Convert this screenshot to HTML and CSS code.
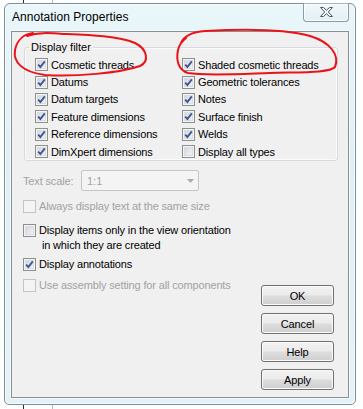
FILE: index.html
```html
<!DOCTYPE html>
<html>
<head>
<meta charset="utf-8">
<link rel="stylesheet" href="styles.css">
</head>
<body>
<div class="desk">
  <div class="bgline bgline-a"></div>
  <div class="bgline bgline-b"></div>
  <div class="window">
    <div class="titlebar">
      <span class="title">Annotation Properties</span>
      <div class="close">
        <svg width="13" height="10" viewBox="0 0 13 10"><polygon points="0.5,0.5 3.5,0.5 6.5,3.3 9.5,0.5 12.5,0.5 8.3,5 12.5,9.5 9.5,9.5 6.5,6.7 3.5,9.5 0.5,9.5 4.7,5" fill="#f2f5f7" stroke="#4f5863" stroke-width="1" stroke-linejoin="round"/></svg>
      </div>
    </div>
    <div class="client">
      <div class="group">
        <span class="legend">Display filter</span>
        <div class="filter-grid">
          <label class="opt"><span class="cb on"><svg width="9" height="9" viewBox="0 0 9 9"><path d="M1.2 4.6 L3.4 7 L7.8 1.4" fill="none" stroke="#3f5697" stroke-width="1.9"/></svg></span>Cosmetic threads</label>
          <label class="opt"><span class="cb on"><svg width="9" height="9" viewBox="0 0 9 9"><path d="M1.2 4.6 L3.4 7 L7.8 1.4" fill="none" stroke="#3f5697" stroke-width="1.9"/></svg></span>Shaded cosmetic threads</label>
          <label class="opt"><span class="cb on"><svg width="9" height="9" viewBox="0 0 9 9"><path d="M1.2 4.6 L3.4 7 L7.8 1.4" fill="none" stroke="#3f5697" stroke-width="1.9"/></svg></span>Datums</label>
          <label class="opt"><span class="cb on"><svg width="9" height="9" viewBox="0 0 9 9"><path d="M1.2 4.6 L3.4 7 L7.8 1.4" fill="none" stroke="#3f5697" stroke-width="1.9"/></svg></span>Geometric tolerances</label>
          <label class="opt"><span class="cb on"><svg width="9" height="9" viewBox="0 0 9 9"><path d="M1.2 4.6 L3.4 7 L7.8 1.4" fill="none" stroke="#3f5697" stroke-width="1.9"/></svg></span>Datum targets</label>
          <label class="opt"><span class="cb on"><svg width="9" height="9" viewBox="0 0 9 9"><path d="M1.2 4.6 L3.4 7 L7.8 1.4" fill="none" stroke="#3f5697" stroke-width="1.9"/></svg></span>Notes</label>
          <label class="opt"><span class="cb on"><svg width="9" height="9" viewBox="0 0 9 9"><path d="M1.2 4.6 L3.4 7 L7.8 1.4" fill="none" stroke="#3f5697" stroke-width="1.9"/></svg></span>Feature dimensions</label>
          <label class="opt"><span class="cb on"><svg width="9" height="9" viewBox="0 0 9 9"><path d="M1.2 4.6 L3.4 7 L7.8 1.4" fill="none" stroke="#3f5697" stroke-width="1.9"/></svg></span>Surface finish</label>
          <label class="opt"><span class="cb on"><svg width="9" height="9" viewBox="0 0 9 9"><path d="M1.2 4.6 L3.4 7 L7.8 1.4" fill="none" stroke="#3f5697" stroke-width="1.9"/></svg></span>Reference dimensions</label>
          <label class="opt"><span class="cb on"><svg width="9" height="9" viewBox="0 0 9 9"><path d="M1.2 4.6 L3.4 7 L7.8 1.4" fill="none" stroke="#3f5697" stroke-width="1.9"/></svg></span>Welds</label>
          <label class="opt"><span class="cb on"><svg width="9" height="9" viewBox="0 0 9 9"><path d="M1.2 4.6 L3.4 7 L7.8 1.4" fill="none" stroke="#3f5697" stroke-width="1.9"/></svg></span>DimXpert dimensions</label>
          <label class="opt"><span class="cb"></span>Display all types</label>
        </div>
      </div>

      <div class="scale-row">
        <span class="scale-label">Text scale:</span>
        <div class="combo">
          <span class="combo-value">1:1</span>
          <svg width="7" height="4" viewBox="0 0 7 4"><polygon points="0,0 7,0 3.5,4" fill="#a9a9a9"/></svg>
        </div>
      </div>

      <div class="lower">
        <div class="options">
          <label class="opt2 disabled opt-always"><span class="cb dis"></span><span>Always display text at the same size</span></label>
          <label class="opt2 opt-items"><span class="cb"></span><span>Display items only in the view orientation<br>&nbsp;in which they are created</span></label>
          <label class="opt2 opt-annot"><span class="cb on"><svg width="9" height="9" viewBox="0 0 9 9"><path d="M1.2 4.6 L3.4 7 L7.8 1.4" fill="none" stroke="#3f5697" stroke-width="1.9"/></svg></span><span>Display annotations</span></label>
          <label class="opt2 disabled opt-assembly"><span class="cb dis"></span><span>Use assembly setting for all components</span></label>
        </div>
        <div class="buttons">
          <button class="btn">OK</button>
          <button class="btn">Cancel</button>
          <button class="btn">Help</button>
          <button class="btn">Apply</button>
        </div>
      </div>
    </div>
  </div>
  <svg class="markup" width="363" height="409" viewBox="0 0 363 409">
    <path d="M33,33 C24,34 17,40 15,50 C13,62 22,72 45,75 C75,77 120,73 140,66 C150,61 147,49 135,43 C118,36 90,35 65,34 C50,33 38,32 27,36" fill="none" stroke="#e8141a" stroke-width="2" stroke-linecap="round"/>
    <path d="M181,43 C184,36 192,32 205,31 C240,29 285,29 310,36 C330,42 340,55 335,67 C330,73 300,72 270,73 C240,74 205,76 188,73 C178,70 176,60 178,50 C179,45 181,42 186,38" fill="none" stroke="#e8141a" stroke-width="2" stroke-linecap="round"/>
  </svg>
</div>
</body>
</html>
```

FILE: styles.css
```css
html, body {
  margin: 0;
  padding: 0;
  background: #fdfefe;
}

.desk {
  position: relative;
  width: 363px;
  height: 409px;
  overflow: hidden;
  font-family: "Liberation Sans", Arial, sans-serif;
  font-size: 11px;
  color: #000;
}

.bgline {
  position: absolute;
  top: 0;
  width: 1px;
  height: 409px;
}
.bgline-a { left: 23px; background: #2b2b2b; }
.bgline-b { left: 52px; background: #b9bcbe; }

.window {
  position: relative;
  z-index: 1;
  box-sizing: border-box;
  margin: 3px 0 0 4px;
  width: 352px;
  height: 402px;
  border: 1px solid #7f8d97;
  border-radius: 6px 6px 5px 5px;
  background: linear-gradient(#e9f6fa, #dff0f5 40%, #e4f2f7);
  box-shadow: inset 0 0 0 1px #f6fcfe;
  padding: 0 6px 6px 6px;
  display: flex;
  flex-direction: column;
}

.titlebar {
  height: 27px;
  display: flex;
  align-items: flex-start;
  justify-content: space-between;
}

.title {
  font-size: 12px;
  line-height: 14px;
  margin-top: 6px;
  margin-left: 1px;
  color: #000;
  letter-spacing: 0.05px;
}

.close {
  box-sizing: border-box;
  width: 46px;
  height: 19px;
  margin-top: -1px;
  border: 1px solid #8d99a3;
  border-top-color: #a8b3ba;
  border-radius: 0 0 4px 4px;
  background: linear-gradient(#f1f8fb, #e2eff4);
  box-shadow: inset 0 0 0 1px #f9fdff;
  display: flex;
  align-items: center;
  justify-content: center;
  padding-bottom: 1px;
}

.close svg { display: block; }

.client {
  flex: 1;
  box-sizing: border-box;
  border: 1px solid #858f98;
  background: #f0f0f0;
  display: flex;
  flex-direction: column;
  box-shadow: 0 0 0 1px #f7fbfd;
}

.group {
  position: relative;
  box-sizing: border-box;
  margin: 15px 0 0 12px;
  width: 314px;
  border: 1px solid #d5dbdf;
  border-radius: 3px;
  box-shadow: inset 0 0 0 1px #fbfbfb;
  padding: 8px 0 0 10px;
}

.legend {
  position: absolute;
  top: -8px;
  left: 4px;
  padding: 0 2px;
  background: #f0f0f0;
  line-height: 14px;
}

.filter-grid {
  display: grid;
  grid-template-columns: 147px 1fr;
  grid-auto-rows: 17.4px;
}

.opt, .opt2 {
  display: flex;
  align-items: center;
  gap: 3px;
  white-space: nowrap;
  letter-spacing: -0.15px;
}

.cb {
  box-sizing: border-box;
  flex: none;
  width: 13px;
  height: 13px;
  border: 1px solid #8e8f8f;
  background: linear-gradient(135deg, #c9ced5 0%, #e6e8eb 55%, #f7f7f7 100%);
  box-shadow: inset 0 0 0 1px #f4f4f4, inset 0 0 0 2px #d9dde2;
  display: flex;
  align-items: center;
  justify-content: center;
}

.cb svg { display: block; }

.cb.dis {
  border-color: #c4c4c4;
  background: #f4f4f4;
  box-shadow: none;
}

.scale-row {
  display: flex;
  align-items: center;
  margin-top: 9px;
  padding-left: 11px;
  color: #a2a2a2;
}

.scale-label {
  width: 58px;
  letter-spacing: -0.15px;
}

.combo {
  box-sizing: border-box;
  width: 118px;
  height: 21px;
  border: 1px solid #c6c6c6;
  border-radius: 2px;
  background: #f4f4f4;
  display: flex;
  align-items: center;
  justify-content: space-between;
  padding: 0 4px 0 5px;
}

.combo svg { display: block; }

.lower {
  flex: 1;
  display: flex;
  padding-left: 11px;
  padding-right: 14px;
  margin-top: 8px;
}

.options {
  display: flex;
  flex-direction: column;
}

.opt2 {
  align-items: flex-start;
  line-height: 15px;
}

.opt2 .cb { margin-top: 1px; }

.opt2.disabled { color: #a2a2a2; }

.opt-items { margin-top: 9px; }
.opt-annot { margin-top: 4px; }
.opt-assembly { margin-top: 6px; }

.buttons {
  margin-left: auto;
  padding-top: 86px;
  display: flex;
  flex-direction: column;
  gap: 7px;
}

.btn {
  box-sizing: border-box;
  width: 73px;
  height: 21px;
  border: 1px solid #707070;
  border-radius: 3px;
  background: linear-gradient(#f2f2f2 0%, #ebebeb 48%, #dddddd 52%, #cfcfcf 100%);
  box-shadow: inset 0 0 0 1px #fbfbfb;
  font-family: "Liberation Sans", Arial, sans-serif;
  font-size: 11px;
  color: #000;
  padding: 0;
  letter-spacing: -0.15px;
}

.markup {
  position: absolute;
  left: 0;
  top: 0;
  z-index: 2;
  pointer-events: none;
}
```
